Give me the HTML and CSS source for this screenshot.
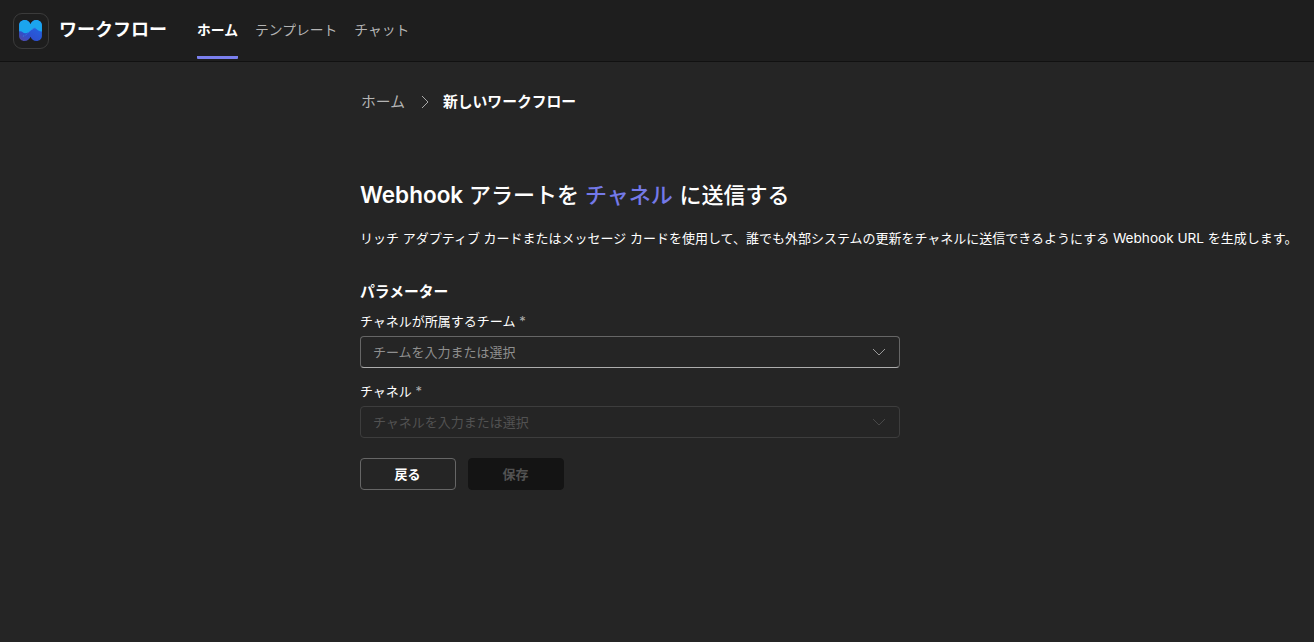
FILE: index.html
```html
<!DOCTYPE html>
<html lang="ja">
<head>
<meta charset="utf-8">
<title>ワークフロー</title>
<link rel="stylesheet" href="styles.css">
</head>
<body>
<header class="topbar">
  <div class="app-icon">
    <svg width="23" height="21" viewBox="0 0 24 22">
      <defs>
        <linearGradient id="lower" x1="0" y1="1" x2="0.6" y2="0.2">
          <stop offset="0" stop-color="#5848a0"/>
          <stop offset="0.45" stop-color="#2d50cf"/>
          <stop offset="1" stop-color="#2460e0"/>
        </linearGradient>
        <clipPath id="shape"><path d="M6 0C2.700 0 0 2.500 0 5.500V16.500C0 19.800 2.500 22 5.800 22C9 22 10.800 20 12 17.500C13.200 20 15 22 18.200 22C21.500 22 24 19.800 24 16.500V5.500C24 2.500 21.300 0 18 0C15 0 13.200 1.800 12 4.400C10.800 1.800 9 0 6 0Z"/></clipPath>
      </defs>
      <g clip-path="url(#shape)">
        <rect width="24" height="22" fill="url(#lower)"/>
        <path d="M0 0H24V12C21 12.500 19 10 16.500 8.500C13 9.500 11 14 6.500 14C4 13.500 3 11 0 12Z" fill="#1ba5ee"/>
        <path d="M4 17C9 16 11 10 17 8" fill="none" stroke="#3c7ee0" stroke-width="1" stroke-dasharray="1.500 1.500"/>
      </g>
    </svg>
  </div>
  <div class="app-name">ワークフロー</div>
  <nav class="tabs">
    <a class="tab tab-active">ホーム</a>
    <a class="tab">テンプレート</a>
    <a class="tab">チャット</a>
  </nav>
</header>
<main class="content">
  <div class="breadcrumb">
    <span class="crumb">ホーム</span>
    <svg class="crumb-arrow" width="8" height="14" viewBox="0 0 8 14"><path d="M1 1L7 7L1 13"/></svg>
    <span class="crumb-current">新しいワークフロー</span>
  </div>
  <h1 class="title"><span class="title-latin">Webhook</span> アラートを <span class="accent">チャネル</span> に送信する</h1>
  <p class="description">リッチ アダプティブ カードまたはメッセージ カードを使用して、誰でも外部システムの更新をチャネルに送信できるようにする <span class="latin">Webhook URL </span>を生成します。</p>
  <h2 class="section">パラメーター</h2>
  <label class="label">チャネルが所属するチーム <span class="required">*</span></label>
  <div class="combo"><span>チームを入力または選択</span><svg width="14" height="8" viewBox="0 0 14 8"><path d="M1 1L7 7L13 1"/></svg></div>
  <label class="label label-second">チャネル <span class="required">*</span></label>
  <div class="combo combo-disabled"><span>チャネルを入力または選択</span><svg width="14" height="8" viewBox="0 0 14 8"><path d="M1 1L7 7L13 1"/></svg></div>
  <div class="actions">
    <button class="button">戻る</button>
    <button class="button button-disabled" disabled>保存</button>
  </div>
</main>
</body>
</html>
```
FILE: styles.css
```css
* { box-sizing: border-box; }
body {
  margin: 0;
  height: 642px;
  overflow: hidden;
  background: #252525;
  color: #fff;
  font-family: Inter, "Noto Sans CJK JP", sans-serif;
  font-size: 13px;
}
.topbar {
  display: flex;
  height: 62px;
  padding-left: 13px;
  background: #1e1e1e;
  border-bottom: 1px solid #111;
}
.app-icon {
  display: flex;
  align-items: center;
  justify-content: center;
  width: 36px;
  height: 36px;
  margin-top: 13px;
  padding: 0 1px 1px 0;
  border: 1px solid #3b3b3b;
  border-radius: 9px;
}
.app-name {
  width: 138px;
  padding-left: 10px;
  line-height: 60px;
  font-size: 18px;
  font-weight: 600;
}
.tabs {
  display: flex;
  gap: 17px;
  margin-left: 10px;
}
.tab {
  height: 59px;
  line-height: 61px;
  font-size: 13.800px;
  color: #b4b4b4;
}
.tab-active {
  color: #fff;
  font-weight: 700;
  border-bottom: 3px solid #7a7fee;
  border-radius: 1px;
}
.content { padding: 26px 0 0 360px; }
.breadcrumb {
  display: flex;
  align-items: center;
  height: 24px;
  padding-left: 1px;
  font-size: 14.800px;
}
.crumb { color: #b4b4b4; }
.crumb-arrow {
  margin: 3px 14px 0 16px;
  fill: none;
  stroke: #a8a8a8;
}
.crumb-current { font-weight: 700; }
.title {
  margin: 66px 0 0;
  height: 34px;
  line-height: 34px;
  font-size: 22px;
  font-weight: 500;
  white-space: nowrap;
}
.title-latin {
  font-size: 22.500px;
  font-weight: 600;
}
.accent {
  margin-right: 1px;
  color: #7479e8;
}
.description {
  margin: 16px 0 0;
  line-height: 20px;
  font-size: 13px;
  white-space: nowrap;
}
.latin { font-size: 13.600px; }
.section {
  margin: 33px 0 0;
  line-height: 22px;
  font-size: 14.800px;
  font-weight: 700;
}
.label {
  display: block;
  margin-top: 8px;
  line-height: 20px;
  height: 25px;
}
.label-second { margin-top: 13px; }
.required { color: #adadad; }
.combo {
  display: flex;
  align-items: center;
  justify-content: space-between;
  width: 540px;
  height: 32px;
  padding: 0 13px 0 12px;
  border: 1px solid #666;
  border-bottom-color: #adadad;
  border-radius: 4px;
  color: #8f8f8f;
}
.combo span { padding-bottom: 2px; }
.combo svg {
  fill: none;
  stroke: #999;
}
.combo-disabled {
  border-color: #3d3d3d;
  color: #525252;
}
.combo-disabled svg { stroke: #484848; }
.actions {
  display: flex;
  gap: 12px;
  margin-top: 20px;
}
.button {
  width: 96px;
  height: 32px;
  padding: 0 1px 2px 0;
  border: 1px solid #666;
  border-radius: 4px;
  background: transparent;
  color: #fff;
  font: 700 13px Inter, "Noto Sans CJK JP", sans-serif;
}
.button-disabled {
  border-color: #141414;
  background: #141414;
  color: #525252;
}
```
